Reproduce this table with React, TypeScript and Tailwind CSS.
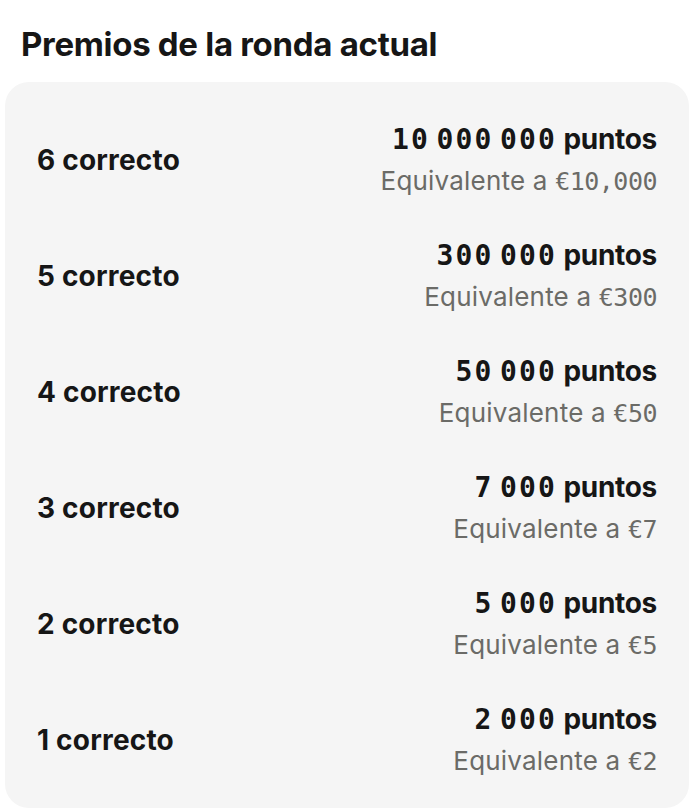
const prizes = [
  { label: "6 correcto", points: "10 000 000", eur: "10,000" },
  { label: "5 correcto", points: "300 000", eur: "300" },
  { label: "4 correcto", points: "50 000", eur: "50" },
  { label: "3 correcto", points: "7 000", eur: "7" },
  { label: "2 correcto", points: "5 000", eur: "5" },
  { label: "1 correcto", points: "2 000", eur: "2" },
];

const sans = "font-['Inter',_'Liberation_Sans',_sans-serif]";
const mono = "font-['DejaVu_Sans_Mono',_'Liberation_Mono',_monospace]";

function Points({ value }: { value: string }) {
  const groups = value.split(" ");
  return (
    <>
      {groups.map((g, i) => (
        <span key={i}>
          <span className={`${mono} text-[28px] tracking-[2.2px]`}>{g}</span>{" "}
        </span>
      ))}
    </>
  );
}

export default function App() {
  return (
    <div className={`min-h-screen bg-white px-[5px] pt-[24px] ${sans} text-[#161616]`}>
      {/* Title */}
      <h2 className="pl-4 text-[33px] font-bold leading-[40px] tracking-[-0.3px]">
        Premios de la ronda actual
      </h2>

      {/* Prize card */}
      <div className="mt-[18px] w-[684px] rounded-[24px] bg-[#f5f5f5] pt-[20px] pb-[10px] pl-8 pr-[32px]">
        {prizes.map((p) => (
          <div key={p.label} className="flex h-[116px] items-center justify-between">
            <span className="text-[28px] font-bold tracking-[0.2px]">{p.label}</span>
            <div className="flex flex-col items-end">
              <span className="text-[28px] font-bold leading-[41px] tracking-[-0.3px]">
                <Points value={p.points} />
                puntos
              </span>
              <span className="text-[26px] leading-[41px] text-[#6b6b67] tracking-[0.2px]">
                Equivalente a <span className={`${mono} text-[25px] tracking-[-0.5px]`}>€{p.eur}</span>
              </span>
            </div>
          </div>
        ))}
      </div>
    </div>
  );
}
